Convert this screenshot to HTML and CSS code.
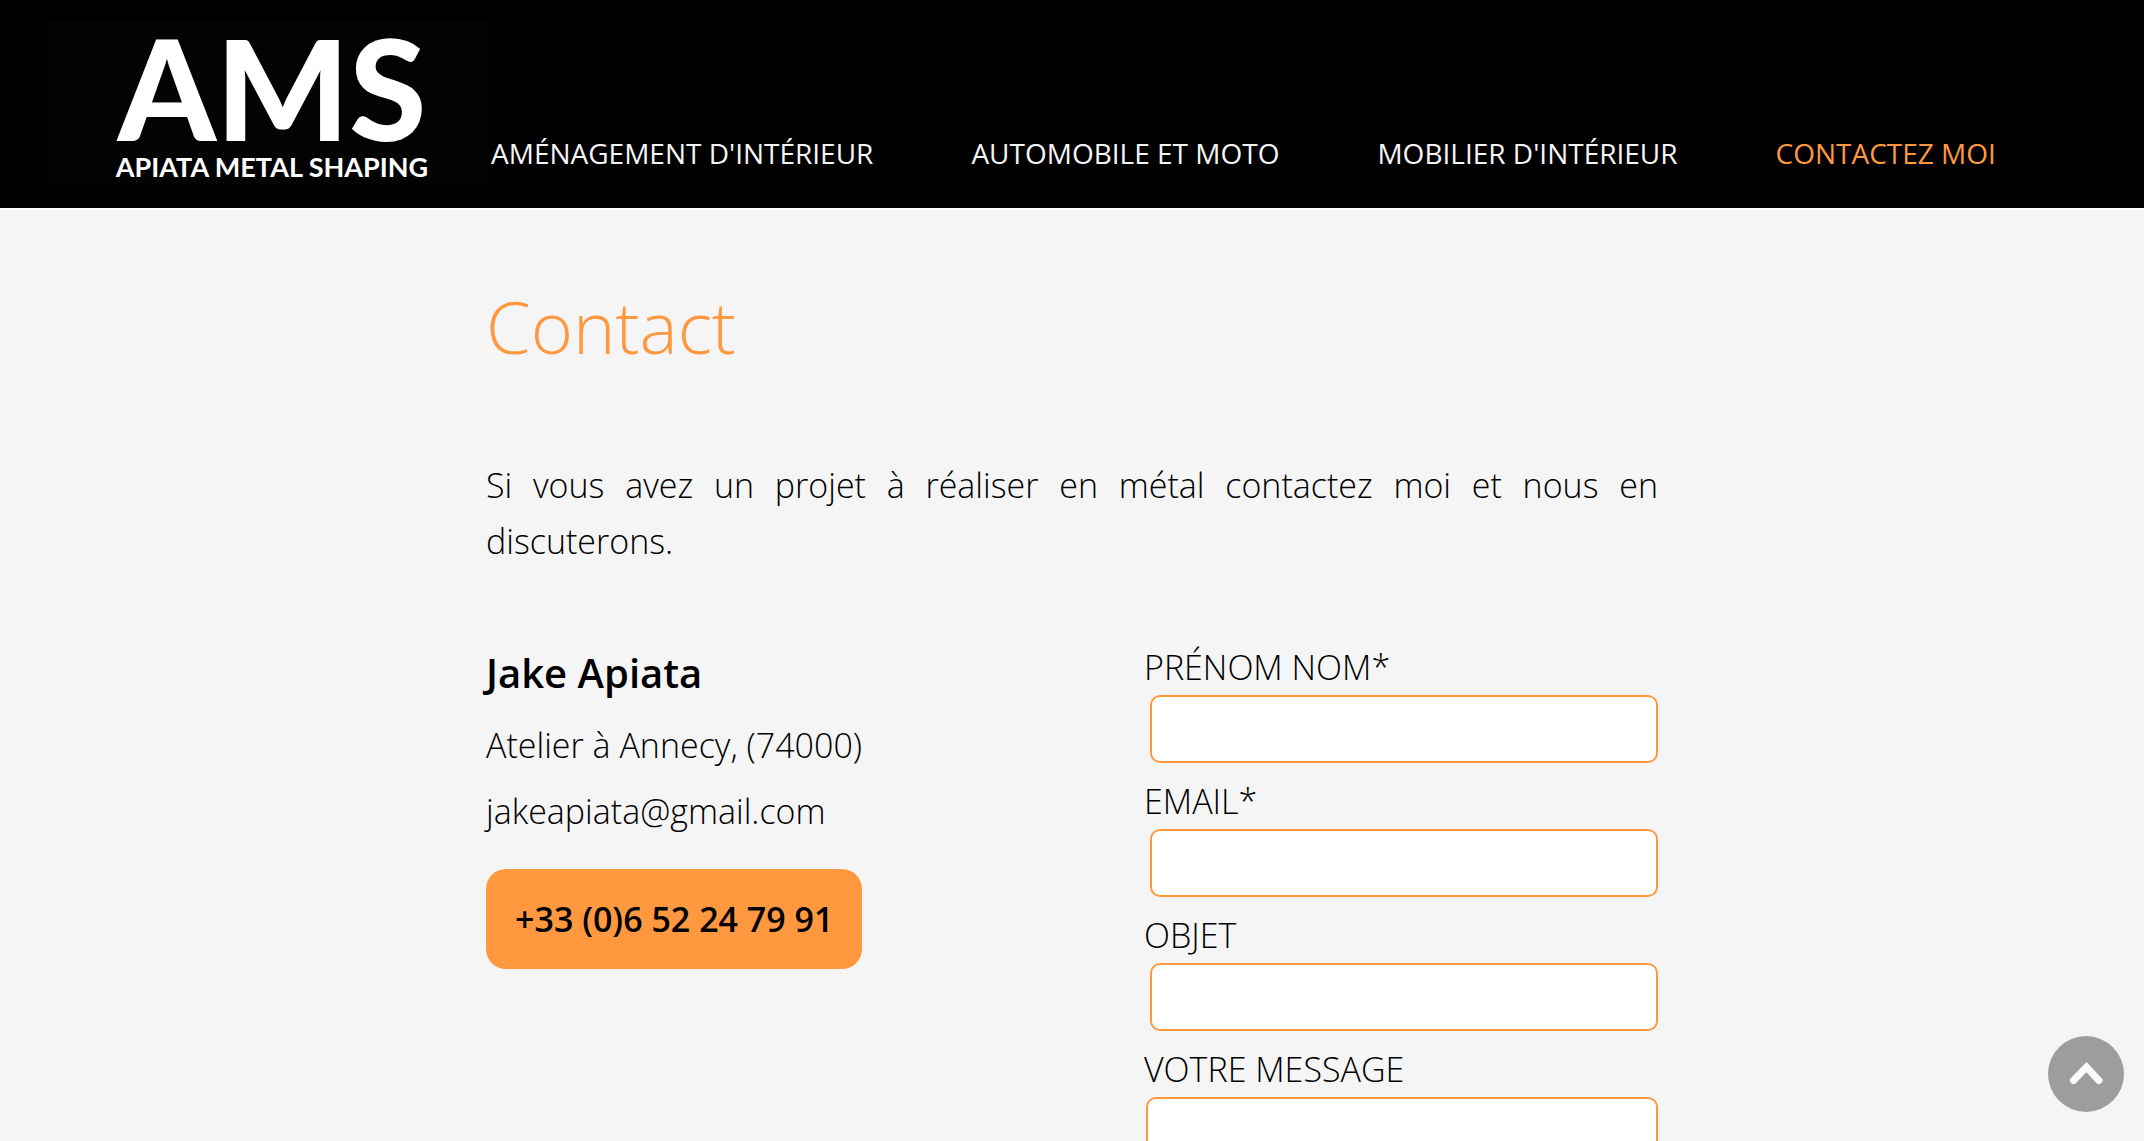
FILE: index.html
```html
<!DOCTYPE html>
<html lang="fr">
<head>
    <meta charset="UTF-8">
    <meta name="viewport" content="width=device-width, initial-scale=1.0">
    <title>Contact - Apiata Metal Shaping</title>
    <link rel="stylesheet" href="styles.css">
</head>
<body>
    <header class="header">
        <a class="logo" href="#">
            <span class="logo-title">AMS</span>
            <span class="logo-subtitle">APIATA METAL SHAPING</span>
        </a>
        <nav class="menu">
            <a href="#">AMÉNAGEMENT D'INTÉRIEUR</a>
            <a href="#">AUTOMOBILE ET MOTO</a>
            <a href="#">MOBILIER D'INTÉRIEUR</a>
            <a href="#" class="active">CONTACTEZ MOI</a>
        </nav>
    </header>

    <main class="container">
        <h1>Contact</h1>
        <p class="intro">Si vous avez un projet à réaliser en métal contactez moi et nous en discuterons.</p>

        <div class="contact">
            <div class="infos">
                <h2>Jake Apiata</h2>
                <p>Atelier à Annecy, (74000)</p>
                <p>jakeapiata@gmail.com</p>
                <a class="phone" href="tel:+33652247991">+33 (0)6 52 24 79 91</a>
            </div>

            <form class="form" method="post">
                <label for="name">PRÉNOM NOM*</label>
                <input type="text" id="name" name="name" required>
                <label for="email">EMAIL*</label>
                <input type="email" id="email" name="email" required>
                <label for="subject">OBJET</label>
                <input type="text" id="subject" name="subject">
                <label for="message">VOTRE MESSAGE</label>
                <textarea id="message" name="message"></textarea>
            </form>
        </div>
    </main>

    <button type="button" class="to-top" aria-label="Haut de page">
        <svg viewBox="0 0 76 76" width="76" height="76">
            <path d="M25.500 44.500 38.500 31 51 44.500" fill="none" stroke="#fafafa" stroke-width="7" stroke-linecap="round" stroke-linejoin="miter"/>
        </svg>
    </button>

    <script>
        document.querySelector(".to-top").addEventListener("click", function () {
            window.scrollTo({ top: 0, behavior: "smooth" });
        });
    </script>
</body>
</html>
```
FILE: styles.css
```css
* {
    box-sizing: border-box;
}

body {
    margin: 0;
    font-family: "Open Sans", sans-serif;
    font-size: 34px;
    font-weight: 300;
    line-height: 56px;
    color: #000;
    background-color: #f5f5f5;
}

.header {
    display: flex;
    align-items: flex-end;
    padding: 20px 48px 23px;
    background-color: #000;
    border-bottom: 2px solid #fff;
}

.logo {
    display: flex;
    flex-direction: column;
    align-items: center;
    justify-content: flex-end;
    gap: 6px;
    flex: 0 0 440px;
    height: 165px;
    padding: 0 0 4px 8px;
    background-color: #030303;
    color: #fff;
    font-family: Lato, sans-serif;
    text-decoration: none;
}

.logo-title {
    font-size: 140px;
    font-weight: 900;
    line-height: 120px;
}

.logo-subtitle {
    font-size: 27px;
    font-weight: 700;
    line-height: 28px;
}

.menu {
    display: flex;
    gap: 98px;
    padding: 0 0 4px 3px;
}

.menu a {
    color: #f5f5f5;
    font-size: 28px;
    font-weight: 400;
    text-decoration: none;
    white-space: nowrap;
}

.menu a.active,
.menu a:hover {
    color: #ff983f;
}

.container {
    max-width: 1172px;
    margin: 0 auto;
    padding: 67px 0;
}

h1 {
    margin: 0 0 82px;
    color: #ff983f;
    font-size: 72px;
    font-weight: 300;
    line-height: 98px;
}

.intro {
    margin: 0 0 70px;
    text-align: justify;
}

.contact {
    display: flex;
    justify-content: space-between;
    align-items: flex-start;
}

.infos {
    padding-top: 6px;
}

.infos h2 {
    margin: 0 0 16px;
    font-size: 40px;
    font-weight: 600;
    line-height: 56px;
}

.infos p {
    margin: 0 0 10px;
}

.phone {
    display: inline-block;
    margin-top: 20px;
    padding: 22px 29px;
    border-radius: 20px;
    background-color: #ff983f;
    color: #000;
    font-weight: 600;
    text-decoration: none;
}

.form {
    display: flex;
    flex-direction: column;
    flex: 0 1 514px;
}

.form input,
.form textarea {
    border: 2px solid #ff983f;
    border-radius: 10px;
    background-color: #fff;
    font: inherit;
}

.form input {
    height: 68px;
    margin: 0 0 10px 6px;
    padding: 0 12px;
}

.form textarea {
    height: 240px;
    margin-left: 2px;
    padding: 12px;
}

.to-top {
    position: fixed;
    right: 20px;
    bottom: 29px;
    width: 76px;
    height: 76px;
    padding: 0;
    border: none;
    border-radius: 50%;
    background-color: #9d9d9d;
    cursor: pointer;
}

.to-top svg {
    display: block;
}
```
